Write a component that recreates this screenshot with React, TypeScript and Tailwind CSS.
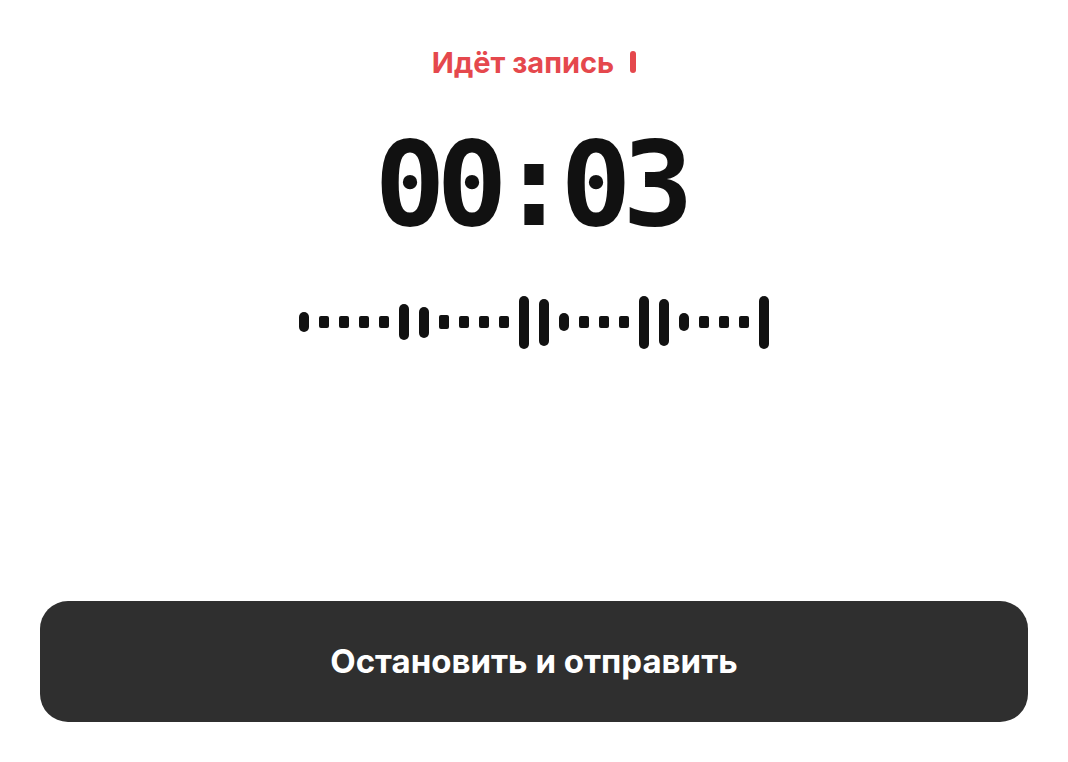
import React from 'react';

const BARS = [20, 12, 12, 12, 12, 36, 31, 14, 12, 12, 12, 53, 47, 18, 12, 12, 12, 53, 47, 18, 12, 12, 12, 53];

export default function App() {
  return (
    <div className="h-screen w-full bg-white flex flex-col px-10 pb-10 font-['Inter','Noto_Sans',sans-serif]">
      <div className="flex flex-col items-center pt-[44px]">
        <div className="flex items-center gap-[16px] h-[36px]">
          <span className="text-[29px] font-bold text-[#e5484d] leading-none">Идёт запись</span>
          <span className="w-[6px] h-[22px] rounded-full bg-[#e5484d]" />
        </div>

        <div className="mt-[44px] font-['DejaVu_Sans_Mono',monospace] font-bold text-[118px] leading-[120px] tracking-[-9px] pr-[9px] text-[#111111]">
          00:03
        </div>

        <div className="mt-[50px] h-[56px] flex items-center gap-[10px]">
          {BARS.map((h, i) => (
            <div
              key={i}
              className={`w-[10px] bg-[#111111] ${h > 14 ? 'rounded-full' : 'rounded-[2px]'}`}
              style={{ height: h }}
            />
          ))}
        </div>
      </div>

      <div className="flex-1" />

      <button className="h-[121px] w-full rounded-[28px] bg-[#2f2f2f] text-white text-[33px] font-bold">
        Остановить и отправить
      </button>
    </div>
  );
}
